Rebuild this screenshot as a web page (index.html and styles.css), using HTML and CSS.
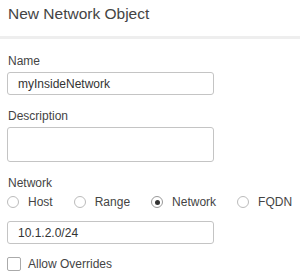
FILE: index.html
```html
<!DOCTYPE html>
<html>
<head>
    <title>New Network Object</title>
    <link rel="stylesheet" href="styles.css">
</head>
<body>
    <div class="header">
        <h2>New Network Object</h2>
    </div>

    <div class="form">
        <div class="input-group">
            <label for="name">Name</label>
            <input type="text" id="name" value="myInsideNetwork">
        </div>

        <div class="input-group">
            <label for="description">Description</label>
            <textarea id="description"></textarea>
        </div>

        <div class="input-group">
            <label>Network</label>
            <div class="radio-row">
                <span class="radio"><span class="dot"></span>Host</span>
                <span class="radio"><span class="dot"></span>Range</span>
                <span class="radio checked"><span class="dot"></span>Network</span>
                <span class="radio"><span class="dot"></span>FQDN</span>
            </div>
            <input type="text" id="network" value="10.1.2.0/24">
        </div>

        <div class="check-row">
            <span class="box"></span>Allow Overrides
        </div>
    </div>
</body>
</html>
```

FILE: styles.css
```css
body {
    margin: 0;
    font-family: "Liberation Sans", Arial, sans-serif;
    color: #444;
    background: #fff;
}
.header {
    height: 36px;
    border-bottom: 3px solid #eeeeee;
}
.header h2 {
    margin: 0;
    padding: 5px 0 0 8px;
    font-size: 15.5px;
    font-weight: normal;
    line-height: 18px;
    color: #444;
}
.form {
    padding: 15px 7px 0 7px;
}
.input-group {
    margin-bottom: 14px;
}
label {
    display: block;
    font-size: 12px;
    line-height: 14px;
    margin: 0 0 4px 1px;
    color: #444;
}
input, textarea {
    display: block;
    box-sizing: border-box;
    width: 207px;
    border: 1px solid #c4c4c4;
    border-radius: 3px;
    font-family: "Liberation Sans", Arial, sans-serif;
    font-size: 12px;
    color: #333;
    margin: 0;
    background: #fff;
}
input {
    height: 23px;
    padding: 0 10px;
}
textarea {
    height: 35px;
    resize: none;
}
.radio-row {
    display: flex;
    align-items: center;
    height: 16px;
    margin: 0 0 11px 0;
    font-size: 12px;
}
.radio {
    display: flex;
    align-items: center;
    gap: 9px;
    margin-right: 21px;
}
.dot {
    width: 12px;
    height: 12px;
    box-sizing: border-box;
    border: 1px solid #bbb;
    border-radius: 50%;
    display: flex;
    align-items: center;
    justify-content: center;
}
.checked .dot {
    border-color: #999;
}
.checked .dot::after {
    content: "";
    width: 5px;
    height: 5px;
    border-radius: 50%;
    background: #333;
}
.check-row {
    display: flex;
    align-items: center;
    gap: 7px;
    font-size: 12px;
    margin-top: -1px;
}
.box {
    width: 14px;
    height: 14px;
    box-sizing: border-box;
    border: 1px solid #aaa;
    border-radius: 2px;
}
```
